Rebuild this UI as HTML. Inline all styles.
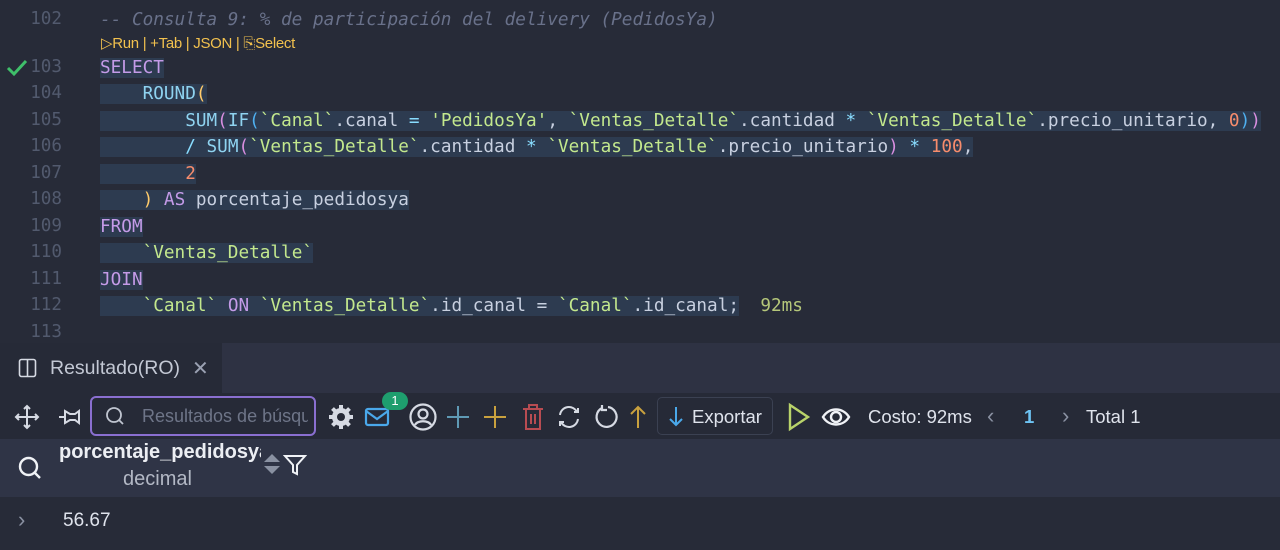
<!DOCTYPE html>
<html><head><meta charset="utf-8"><style>
*{margin:0;padding:0;box-sizing:border-box}
body{width:1280px;height:550px;overflow:hidden;background:#272b38;font-family:"Liberation Sans",sans-serif;position:relative}
.ln{position:absolute;left:0;width:62px;text-align:right;font:17.6px "DejaVu Sans Mono",monospace;color:#525a6e}
.cl{position:absolute;left:100px;font:17.7px "DejaVu Sans Mono",monospace;white-space:pre;color:#c8d0e0;height:26px;line-height:26px}
.hl{background:#2d3b50}
.k{color:#c49be8}.f{color:#8fd3f0}.s{color:#c3e88d}.n{color:#f78c6c}.p{color:#ffcb6b}.pb{color:#4fb0f0}.pm{color:#d88ee0}.c{color:#69718a;font-style:italic}.o{color:#89ddff}
.abs{position:absolute}
.tb{color:#dfe3ec;font-size:18.5px}
</style></head><body>
<div class="ln" style="top:9px">102</div>
<div class="cl c" style="top:7px">-- Consulta 9: % de participación del delivery (PedidosYa)</div>
<div class="abs" style="left:101px;top:34px;font-size:15px;color:#f2c14e;letter-spacing:-0.3px">▷Run | +Tab | JSON | ⎘Select</div>
<svg class="abs" style="left:6px;top:59px" width="22" height="18"><path d="M2 9 L8 15 L20 2" stroke="#3fbf6a" stroke-width="3" fill="none"/></svg>
<div class="ln" style="top:57px">103</div>
<div class="cl" style="top:55px"><span class="hl k">SELECT</span></div>
<div class="ln" style="top:83px">104</div>
<div class="cl" style="top:81px"><span class="hl">    <span class="f">ROUND</span><span class="p">(</span></span></div>
<div class="ln" style="top:110px">105</div>
<div class="cl" style="top:108px"><span class="hl">        <span class="f">SUM</span><span class="pm">(</span><span class="f">IF</span><span class="pb">(</span><span class="s">`Canal`</span>.canal <span class="o">=</span> <span class="s">'PedidosYa'</span>, <span class="s">`Ventas_Detalle`</span>.cantidad <span class="o">*</span> <span class="s">`Ventas_Detalle`</span>.precio_unitario, <span class="n">0</span><span class="pb">)</span><span class="pm">)</span></span></div>
<div class="ln" style="top:136px">106</div>
<div class="cl" style="top:134px"><span class="hl">        <span class="o">/</span> <span class="f">SUM</span><span class="pm">(</span><span class="s">`Ventas_Detalle`</span>.cantidad <span class="o">*</span> <span class="s">`Ventas_Detalle`</span>.precio_unitario<span class="pm">)</span> <span class="o">*</span> <span class="n">100</span>,</span></div>
<div class="ln" style="top:163px">107</div>
<div class="cl" style="top:161px"><span class="hl">        <span class="n">2</span></span></div>
<div class="ln" style="top:189px">108</div>
<div class="cl" style="top:187px"><span class="hl">    <span class="p">)</span> <span class="k">AS</span> porcentaje_pedidosya</span></div>
<div class="ln" style="top:216px">109</div>
<div class="cl" style="top:214px"><span class="hl k">FROM</span></div>
<div class="ln" style="top:242px">110</div>
<div class="cl" style="top:240px"><span class="hl">    <span class="s">`Ventas_Detalle`</span></span></div>
<div class="ln" style="top:269px">111</div>
<div class="cl" style="top:267px"><span class="hl k">JOIN</span></div>
<div class="ln" style="top:295px">112</div>
<div class="cl" style="top:293px"><span class="hl">    <span class="s">`Canal`</span> <span class="k">ON</span> <span class="s">`Ventas_Detalle`</span>.id_canal = <span class="s">`Canal`</span>.id_canal;</span>  <span style="color:#b5c77a">92ms</span></div>
<div class="ln" style="top:322px">113</div>

<div class="abs" style="left:0;top:343px;width:1280px;height:50px;background:#2e3243"></div>
<div class="abs" style="left:0;top:343px;width:222px;height:50px;background:#262a37"></div>
<svg class="abs" style="left:18px;top:358px" width="20" height="20"><rect x="1.5" y="1.5" width="16" height="17" rx="2" fill="none" stroke="#d6dae3" stroke-width="1.6"/><line x1="9.5" y1="2" x2="9.5" y2="18" stroke="#d6dae3" stroke-width="1.6"/></svg>
<div class="abs" style="left:50px;top:357px;color:#c3c8d4;font-size:19.5px">Resultado(RO)</div>
<div class="abs" style="left:192px;top:356px;color:#9aa1b2;font-size:20px">✕</div>

<div class="abs" style="left:0;top:393px;width:1280px;height:46px;background:#262a37"></div>
<svg class="abs" style="left:14px;top:404px" width="26" height="26" fill="none" stroke="#d6dae3" stroke-width="2"><path d="M13 2V24M2 13H24M10 5L13 2L16 5M10 21L13 24L16 21M5 10L2 13L5 16M21 10L24 13L21 16"/></svg>
<svg class="abs" style="left:57px;top:406px" width="26" height="22" fill="none" stroke="#d6dae3" stroke-width="2"><path d="M2 11H8M8 5V17L13 14H18L22 17V5L18 8H13Z"/></svg>
<div class="abs" style="left:90px;top:396px;width:226px;height:40px;border:2px solid #8a6fd0;border-radius:6px;background:#262a37"></div>
<svg class="abs" style="left:105px;top:406px" width="20" height="20" fill="none" stroke="#c0c5d0" stroke-width="1.8"><circle cx="9" cy="9" r="7"/><path d="M14 14L18 18"/></svg>
<div class="abs" style="left:142px;top:406px;font-size:18px;color:#6e7588;width:166px;overflow:hidden;white-space:nowrap">Resultados de búsqueda</div>
<svg class="abs" style="left:328px;top:404px" width="26" height="26"><circle cx="13" cy="13" r="9" fill="#d6dae3"/><g stroke="#d6dae3" stroke-width="4"><path d="M13 1V25M1 13H25M4.5 4.5L21.5 21.5M21.5 4.5L4.5 21.5"/></g><circle cx="13" cy="13" r="4" fill="#262a37"/></svg>
<svg class="abs" style="left:364px;top:405px" width="28" height="24" fill="none" stroke="#4aa8ea" stroke-width="2.2"><rect x="2" y="4" width="22" height="16" rx="2"/><path d="M2 6L13 14L24 6"/></svg>
<div class="abs" style="left:382px;top:392px;width:26px;height:18px;border-radius:9px;background:#1e9e6e;color:#fff;font-size:13px;text-align:center;line-height:18px">1</div>
<svg class="abs" style="left:408px;top:402px" width="30" height="30" fill="none" stroke="#d6dae3" stroke-width="2.2"><circle cx="15" cy="15" r="12.5"/><circle cx="15" cy="12" r="4.5"/><path d="M7 23C9 18 21 18 23 23"/></svg>
<svg class="abs" style="left:446px;top:405px" width="24" height="24" stroke="#5f9ab5" stroke-width="2"><path d="M12 1V23M1 12H23"/></svg>
<svg class="abs" style="left:483px;top:405px" width="24" height="24" stroke="#c9a13e" stroke-width="2"><path d="M12 1V23M1 12H23"/></svg>
<svg class="abs" style="left:521px;top:403px" width="24" height="28" fill="none" stroke="#b84c52" stroke-width="2"><path d="M2 6H22M8 6V2H16V6M5 6V26H19V6M10 11V21M14 11V21"/></svg>
<svg class="abs" style="left:556px;top:404px" width="26" height="26" fill="none" stroke="#d6dae3" stroke-width="2"><path d="M4 11A9 9 0 0 1 21 8M22 15A9 9 0 0 1 5 18M18 8H22V4M8 18H4V22"/></svg>
<svg class="abs" style="left:594px;top:403px" width="26" height="28" fill="none" stroke="#d6dae3" stroke-width="2.2"><path d="M8 5A10 10 0 1 0 14 4M8 2V7H13"/></svg>
<svg class="abs" style="left:628px;top:404px" width="20" height="26" fill="none" stroke="#c9a13e" stroke-width="2"><path d="M10 24V3M3 10L10 3L17 10"/></svg>
<div class="abs" style="left:657px;top:397px;width:116px;height:38px;border:1px solid #3b4152;border-radius:5px"></div>
<svg class="abs" style="left:667px;top:405px" width="18" height="22" fill="none" stroke="#4aa8ea" stroke-width="2"><path d="M9 2V20M3 14L9 20L15 14"/></svg>
<div class="abs tb" style="left:692px;top:406px">Exportar</div>
<svg class="abs" style="left:786px;top:402px" width="26" height="30" fill="none" stroke="#b9d36a" stroke-width="2.4"><path d="M4 3L22 15L4 27Z"/></svg>
<svg class="abs" style="left:821px;top:404px" width="30" height="26" fill="none" stroke="#f0f2f6" stroke-width="2.4"><path d="M2 13C8 3 22 3 28 13C22 23 8 23 2 13Z"/><circle cx="15" cy="13" r="5"/></svg>
<div class="abs tb" style="left:868px;top:406px">Costo: 92ms</div>
<div class="abs" style="left:987px;top:403px;color:#8a91a2;font-size:22px">‹</div>
<div class="abs" style="left:1024px;top:406px;color:#6ec4f4;font-size:18.5px;font-weight:bold">1</div>
<div class="abs" style="left:1062px;top:403px;color:#8a91a2;font-size:22px">›</div>
<div class="abs tb" style="left:1086px;top:406px">Total 1</div>

<div class="abs" style="left:0;top:439px;width:1280px;height:58px;background:#2f3446"></div>
<svg class="abs" style="left:18px;top:456px" width="24" height="24" fill="none" stroke="#f0f2f6" stroke-width="2.4"><circle cx="10.5" cy="10.5" r="8.5"/><path d="M17 17L22 22"/></svg>
<div class="abs" style="left:59px;top:441px;width:202px;overflow:hidden;white-space:nowrap;font-size:20px;font-weight:bold;color:#eceef3">porcentaje_pedidosya</div>
<div class="abs" style="left:123px;top:468px;font-size:20px;color:#b3b8c5">decimal</div>
<svg class="abs" style="left:263px;top:452px" width="18" height="24" fill="#8a91a2"><path d="M9 2L17 10H1Z M9 22L17 14H1Z"/></svg>
<svg class="abs" style="left:283px;top:454px" width="24" height="22" fill="none" stroke="#f0f2f6" stroke-width="2"><path d="M2 2H22L14 11V20L10 18V11Z"/></svg>
<div class="abs" style="left:18px;top:507px;color:#8a91a2;font-size:22px">›</div>
<div class="abs" style="left:63px;top:510px;font-size:19px;color:#dfe3ec">56.67</div>
</body></html>
